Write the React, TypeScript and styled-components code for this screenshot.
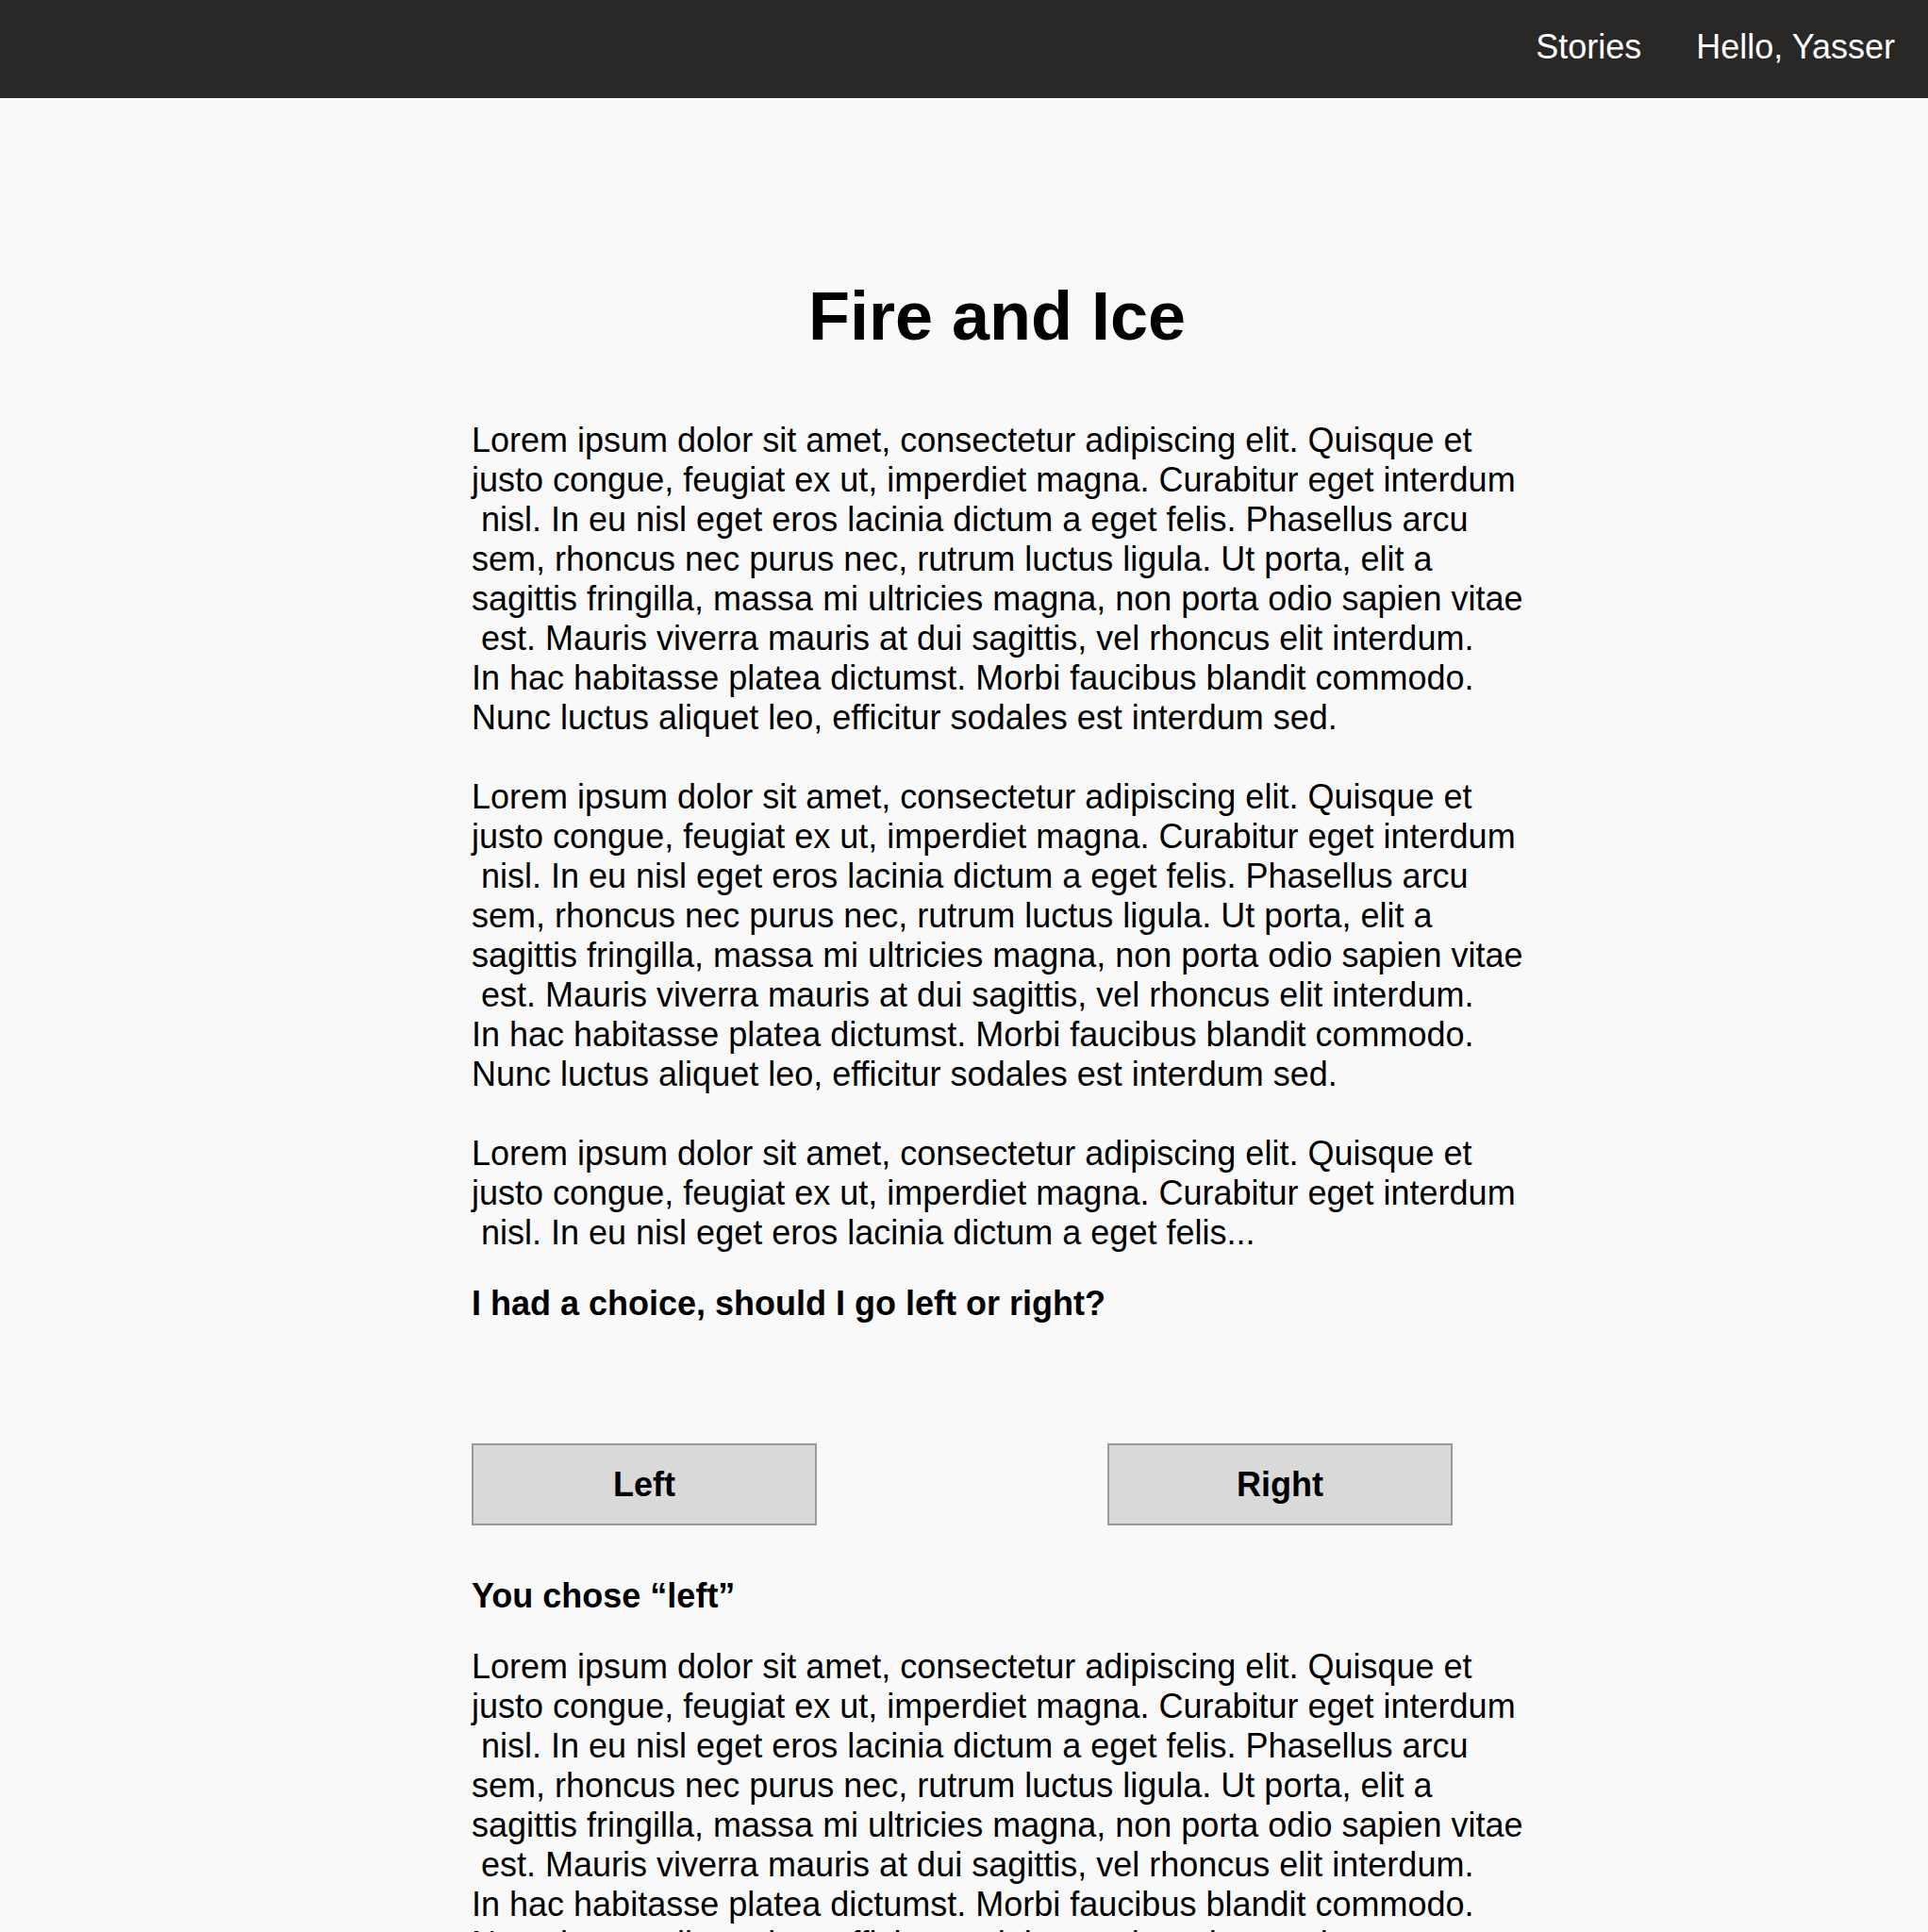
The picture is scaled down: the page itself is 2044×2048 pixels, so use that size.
import styled, { createGlobalStyle } from 'styled-components'

const fullText = [
  'Lorem ipsum dolor sit amet, consectetur adipiscing elit. Quisque et',
  'justo congue, feugiat ex ut, imperdiet magna. Curabitur eget interdum',
  ' nisl. In eu nisl eget eros lacinia dictum a eget felis. Phasellus arcu',
  'sem, rhoncus nec purus nec, rutrum luctus ligula. Ut porta, elit a',
  'sagittis fringilla, massa mi ultricies magna, non porta odio sapien vitae',
  ' est. Mauris viverra mauris at dui sagittis, vel rhoncus elit interdum.',
  'In hac habitasse platea dictumst. Morbi faucibus blandit commodo.',
  'Nunc luctus aliquet leo, efficitur sodales est interdum sed.',
]

const teaserText = [
  'Lorem ipsum dolor sit amet, consectetur adipiscing elit. Quisque et',
  'justo congue, feugiat ex ut, imperdiet magna. Curabitur eget interdum',
  ' nisl. In eu nisl eget eros lacinia dictum a eget felis...',
]

const Paragraph = ({ lines }: { lines: string[] }) => (
  <Para>
    {lines.map((line, i) => (
      <Line key={i}>{line}</Line>
    ))}
  </Para>
)

const App = () => {
  return (
    <>
      <GlobalStyle />
      <Header>
        <Nav>
          <NavItem>Stories</NavItem>
          <NavItem>Hello, Yasser</NavItem>
        </Nav>
      </Header>
      <Main>
        <Story>
          <Title>Fire and Ice</Title>
          <Paragraph lines={fullText} />
          <Paragraph lines={fullText} />
          <Paragraph lines={teaserText} />
          <Question>I had a choice, should I go left or right?</Question>
          <Choices>
            <Choice>Left</Choice>
            <Choice>Right</Choice>
          </Choices>
          <Chosen>You chose “left”</Chosen>
          <Paragraph lines={fullText} />
        </Story>
      </Main>
    </>
  )
}

const GlobalStyle = createGlobalStyle`
  * {
    box-sizing: border-box;
  }
  body {
    margin: 0;
    background: #f9f9f9;
    color: #000;
    font-family: 'Liberation Sans', Arial, sans-serif;
  }
`

const Header = styled.header`
  height: 104px;
  background: #292827;
  display: flex;
  justify-content: flex-end;
  align-items: center;
  padding: 0 35px 5px 0;
`

const Nav = styled.nav`
  display: flex;
  gap: 58px;
`

const NavItem = styled.a`
  color: #fff;
  font-size: 36px;
  line-height: 42px;
  cursor: pointer;
`

const Main = styled.main`
  padding: 191px 0 80px 500px;
`

const Story = styled.article`
  width: 1114px;
  display: flex;
  flex-direction: column;
`

const Title = styled.h1`
  margin: 0 0 71px;
  font-size: 72px;
  line-height: 80px;
  font-weight: 700;
  text-align: center;
`

const Para = styled.p`
  margin: 0 0 42px;
  font-size: 36px;
  line-height: 42px;

  &:last-child {
    margin-bottom: 0;
  }
`

const Line = styled.span`
  display: block;
  white-space: pre;
`

const Question = styled.h3`
  margin: -9px 0 0;
  font-size: 36px;
  line-height: 42px;
  font-weight: 700;
`

const Choices = styled.div`
  display: flex;
  gap: 308px;
  margin-top: 127px;
`

const Choice = styled.button`
  width: 366px;
  height: 87px;
  padding: 0;
  background: #d9d9d9;
  border: 2px solid #999;
  border-radius: 0;
  font-family: 'Liberation Sans', Arial, sans-serif;
  font-size: 36px;
  font-weight: 700;
  color: #000;
  cursor: pointer;
`

const Chosen = styled.h3`
  margin: 54px 0 33px;
  font-size: 36px;
  line-height: 42px;
  font-weight: 700;
`

export default App
